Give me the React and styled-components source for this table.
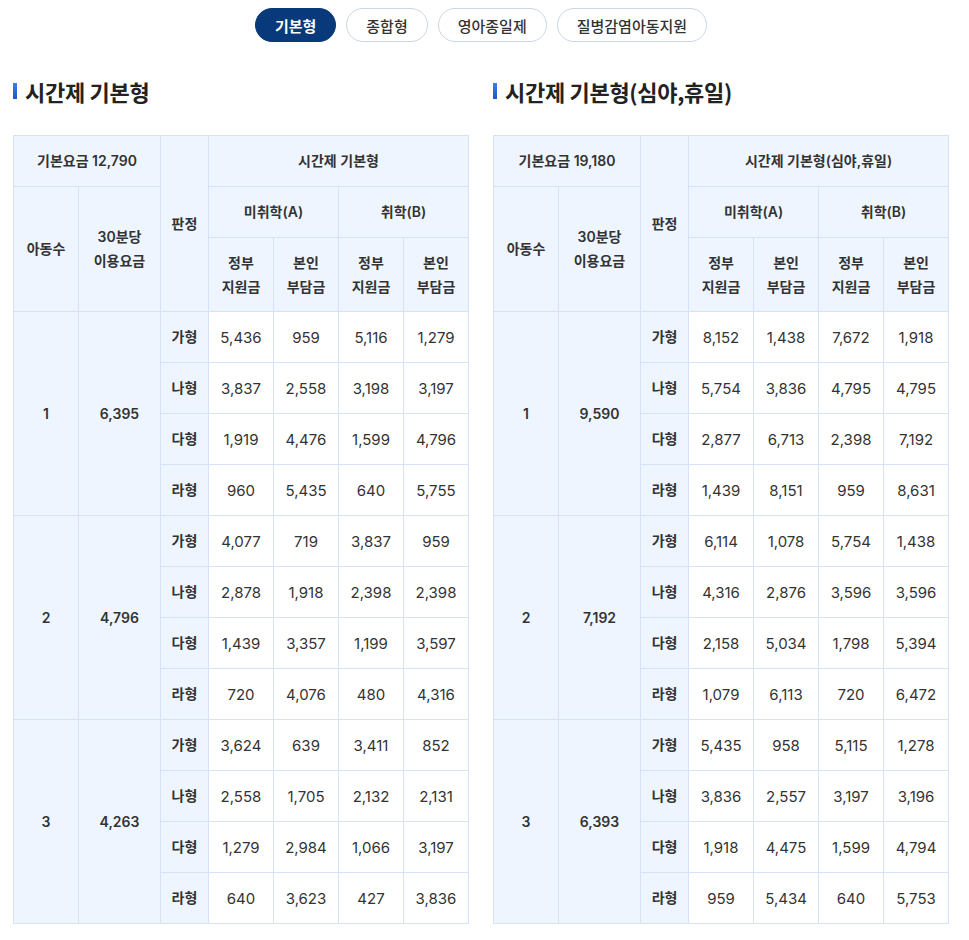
import React from 'react';
import styled, { createGlobalStyle } from 'styled-components';

const GlobalStyle = createGlobalStyle`
  body {
    margin: 0;
    background: #fff;
    font-family: "Inter", "Noto Sans CJK KR", "Noto Sans", sans-serif;
    color: #333;
  }
`;

const tabs = ['기본형', '종합형', '영아종일제', '질병감염아동지원'];
const grades = ['가형', '나형', '다형', '라형'];

const tables = [
  {
    title: '시간제 기본형',
    base: '12,790',
    groups: [
      { kids: 1, fee: '6,395', rows: [['5,436', '959', '5,116', '1,279'], ['3,837', '2,558', '3,198', '3,197'], ['1,919', '4,476', '1,599', '4,796'], ['960', '5,435', '640', '5,755']] },
      { kids: 2, fee: '4,796', rows: [['4,077', '719', '3,837', '959'], ['2,878', '1,918', '2,398', '2,398'], ['1,439', '3,357', '1,199', '3,597'], ['720', '4,076', '480', '4,316']] },
      { kids: 3, fee: '4,263', rows: [['3,624', '639', '3,411', '852'], ['2,558', '1,705', '2,132', '2,131'], ['1,279', '2,984', '1,066', '3,197'], ['640', '3,623', '427', '3,836']] },
    ],
  },
  {
    title: '시간제 기본형(심야,휴일)',
    base: '19,180',
    groups: [
      { kids: 1, fee: '9,590', rows: [['8,152', '1,438', '7,672', '1,918'], ['5,754', '3,836', '4,795', '4,795'], ['2,877', '6,713', '2,398', '7,192'], ['1,439', '8,151', '959', '8,631']] },
      { kids: 2, fee: '7,192', rows: [['6,114', '1,078', '5,754', '1,438'], ['4,316', '2,876', '3,596', '3,596'], ['2,158', '5,034', '1,798', '5,394'], ['1,079', '6,113', '720', '6,472']] },
      { kids: 3, fee: '6,393', rows: [['5,435', '958', '5,115', '1,278'], ['3,836', '2,557', '3,197', '3,196'], ['1,918', '4,475', '1,599', '4,794'], ['959', '5,434', '640', '5,753']] },
    ],
  },
];

export default function App() {
  return (
    <>
      <GlobalStyle />
      <Page>
        <TabBar>
          {tabs.map((t, i) => (
            <Tab key={t} $active={i === 0}>{t}</Tab>
          ))}
        </TabBar>
        <Columns>
          {tables.map((tb) => (
            <Section key={tb.title}>
              <Heading>{tb.title}</Heading>
              <Table>
                <colgroup>
                  <col style={{ width: 65 }} />
                  <col style={{ width: 82 }} />
                  <col style={{ width: 48 }} />
                  <col style={{ width: 65 }} />
                  <col style={{ width: 65 }} />
                  <col style={{ width: 65 }} />
                  <col style={{ width: 65 }} />
                </colgroup>
                <thead>
                  <tr>
                    <Th colSpan={2}>기본요금 {tb.base}</Th>
                    <Th rowSpan={3}>판정</Th>
                    <Th colSpan={4}>{tb.title}</Th>
                  </tr>
                  <tr>
                    <Th rowSpan={2}>아동수</Th>
                    <Th rowSpan={2}>30분당<br />이용요금</Th>
                    <Th colSpan={2}>미취학(A)</Th>
                    <Th colSpan={2}>취학(B)</Th>
                  </tr>
                  <tr>
                    <Th $tall>정부<br />지원금</Th>
                    <Th $tall>본인<br />부담금</Th>
                    <Th $tall>정부<br />지원금</Th>
                    <Th $tall>본인<br />부담금</Th>
                  </tr>
                </thead>
                <tbody>
                  {tb.groups.map((g) =>
                    g.rows.map((r, ri) => (
                      <tr key={g.kids + '-' + ri}>
                        {ri === 0 && <Th rowSpan={4}>{g.kids}</Th>}
                        {ri === 0 && <Th rowSpan={4}>{g.fee}</Th>}
                        <Th>{grades[ri]}</Th>
                        {r.map((v, vi) => (
                          <Td key={vi}>{v}</Td>
                        ))}
                      </tr>
                    ))
                  )}
                </tbody>
              </Table>
            </Section>
          ))}
        </Columns>
      </Page>
    </>
  );
}

const Page = styled.div`
  width: 969px;
  padding: 8px 0 16px;
  box-sizing: border-box;
`;

const TabBar = styled.div`
  display: flex;
  justify-content: center;
  gap: 10px;
  padding-right: 7px;
`;

const Tab = styled.button`
  height: 34px;
  padding: 0 19px;
  border-radius: 17px;
  border: 1px solid ${(p) => (p.$active ? '#08397a' : '#cdd6e4')};
  background: ${(p) => (p.$active ? '#08397a' : '#fff')};
  color: ${(p) => (p.$active ? '#fff' : '#333')};
  font-family: "Noto Sans CJK KR", sans-serif;
  font-size: 15px;
  font-weight: ${(p) => (p.$active ? 700 : 500)};
  cursor: pointer;
`;

const Columns = styled.div`
  display: flex;
  gap: 24px;
  padding: 35px 0 0 13px;
`;

const Section = styled.section`
  width: 456px;
`;

const Heading = styled.h2`
  display: flex;
  align-items: center;
  gap: 8px;
  margin: 0 0 30px;
  height: 28px;
  font-family: "Noto Sans CJK KR", sans-serif;
  font-size: 22px;
  font-weight: 700;
  color: #222;
  letter-spacing: -0.3px;

  &::before {
    content: '';
    width: 4px;
    height: 16px;
    background: linear-gradient(#3b7cf0, #1d56c9);
  }
`;

const Table = styled.table`
  width: 456px;
  table-layout: fixed;
  border-collapse: collapse;
  font-size: 14px;
`;

const Th = styled.th`
  height: ${(p) => (p.$tall ? '73px' : '50px')};
  padding: 0 4px;
  border: 1px solid #d5e2f8;
  background: #eef5ff;
  color: #333;
  font-weight: 600;
  line-height: 24px;
  text-align: center;
`;

const Td = styled.td`
  height: 50px;
  padding: 0 4px;
  border: 1px solid #d5e2f8;
  background: #fff;
  color: #333;
  font-size: 15px;
  text-align: center;
`;
